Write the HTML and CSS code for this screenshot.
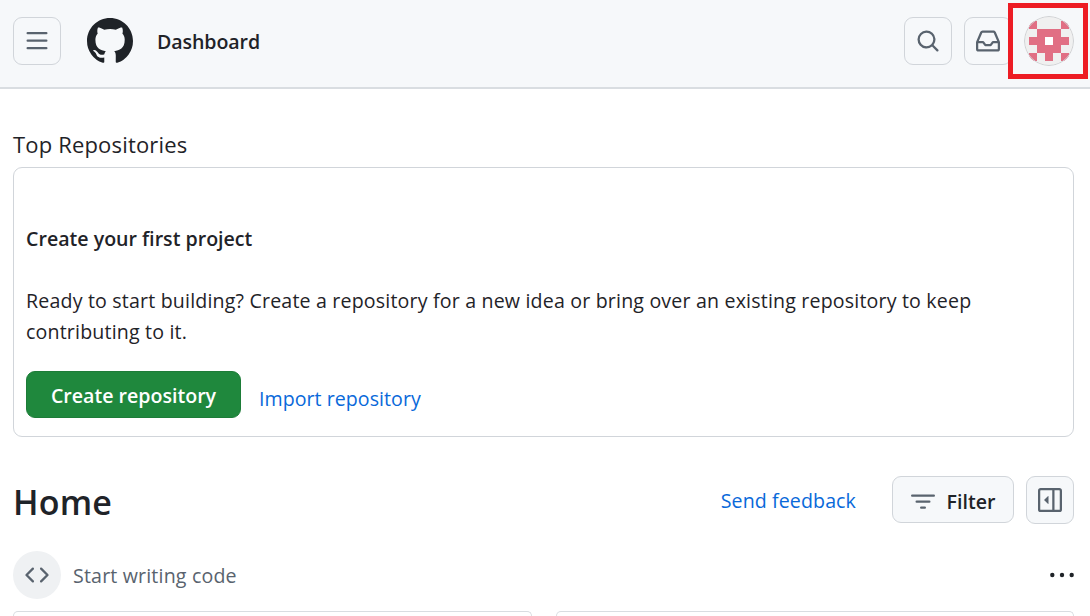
FILE: index.html
```html
<!DOCTYPE html>
<html lang="en">
<head>
  <meta charset="UTF-8">
  <title>Dashboard</title>
  <link rel="stylesheet" href="styles.css">
</head>
<body>
  <header class="header">
    <button class="icon-btn" aria-label="Open menu">
      <svg width="24" height="24" viewBox="0 0 16 16"><path d="M1 2.75A.75.75 0 0 1 1.75 2h12.5a.75.75 0 0 1 0 1.5H1.75A.75.75 0 0 1 1 2.75Zm0 5A.75.75 0 0 1 1.75 7h12.5a.75.75 0 0 1 0 1.5H1.75A.75.75 0 0 1 1 7.75ZM1.75 12h12.5a.75.75 0 0 1 0 1.5H1.75a.75.75 0 0 1 0-1.5Z"/></svg>
    </button>
    <svg class="logo" width="46" height="46" viewBox="0 0 16 16"><path d="M8 0c4.42 0 8 3.58 8 8a8.013 8.013 0 0 1-5.45 7.59c-.4.08-.55-.17-.55-.38 0-.27.01-1.13.01-2.2 0-.75-.25-1.23-.54-1.48 1.78-.2 3.65-.88 3.65-3.95 0-.88-.31-1.59-.82-2.15.08-.2.36-1.02-.08-2.12 0 0-.67-.22-2.2.82-.64-.18-1.32-.27-2-.27-.68 0-1.36.09-2 .27-1.53-1.03-2.2-.82-2.2-.82-.44 1.1-.16 1.92-.08 2.12-.51.56-.82 1.28-.82 2.15 0 3.06 1.86 3.75 3.64 3.95-.23.2-.44.55-.51 1.07-.46.21-1.61.55-2.33-.66-.15-.24-.6-.83-1.23-.82-.67.01-.27.38.01.53.34.19.73.9.82 1.13.16.45.68 1.31 2.69.94 0 .67.01 1.3.01 1.49 0 .21-.15.45-.55.38A7.995 7.995 0 0 1 0 8c0-4.42 3.58-8 8-8Z"/></svg>
    <span class="context">Dashboard</span>
    <div class="header-actions">
      <button class="icon-btn" aria-label="Search">
        <svg width="24" height="24" viewBox="0 0 16 16"><path d="M10.68 11.74a6 6 0 0 1-7.922-8.982 6 6 0 0 1 8.982 7.922l3.04 3.04a.749.749 0 0 1-.326 1.275.749.749 0 0 1-.734-.215ZM11.5 7a4.499 4.499 0 1 0-8.997 0A4.499 4.499 0 0 0 11.5 7Z"/></svg>
      </button>
      <button class="icon-btn" aria-label="Notifications">
        <svg width="24" height="24" viewBox="0 0 16 16"><path d="M2.8 2.06A1.75 1.75 0 0 1 4.41 1h7.18c.7 0 1.333.417 1.61 1.06l2.74 6.395c.04.093.06.194.06.295v4.5A1.75 1.75 0 0 1 14.25 15H1.75A1.75 1.75 0 0 1 0 13.25v-4.5c0-.101.02-.202.06-.295Zm1.61.44a.25.25 0 0 0-.23.152L1.887 8H4.75a.75.75 0 0 1 .6.3L6.625 10h2.75l1.275-1.7a.75.75 0 0 1 .6-.3h2.863L11.82 2.652a.25.25 0 0 0-.23-.152Zm10.09 7h-2.875l-1.275 1.7a.75.75 0 0 1-.6.3h-3.5a.75.75 0 0 1-.6-.3L4.375 9.5H1.5v3.75c0 .138.112.25.25.25h12.5a.25.25 0 0 0 .25-.25Z"/></svg>
      </button>
      <div class="avatar-wrap">
        <svg class="avatar" width="50" height="50" viewBox="0 0 50 50">
          <path fill="#e16f84" shape-rendering="crispEdges" d="M5 5h8v8H5zM37 5h8v8h-8zM13 13h24v8H13zM5 21h16v8H5zM29 21h16v8H29zM13 29h24v8H13zM5 37h8v8H5zM21 37h8v8h-8zM37 37h8v8h-8z"/>
          <path fill="#fff" d="M21 21h8v8h-8z"/>
          <circle cx="25" cy="25" r="24.5" fill="none" stroke="#cfd1d4"/>
        </svg>
        <span class="highlight"></span>
      </div>
    </div>
  </header>

  <main class="content">
    <h2 class="section-title">Top Repositories</h2>
    <section class="project-box">
      <h3 class="project-title">Create your first project</h3>
      <p class="project-text">Ready to start building? Create a repository for a new idea or bring over an existing repository to keep<br>contributing to it.</p>
      <div class="project-actions">
        <button class="btn-primary"><span>Create repository</span></button>
        <a class="link import-link">Import repository</a>
      </div>
    </section>

    <div class="home-row">
      <h1 class="home-title">Home</h1>
      <a class="link feedback-link">Send feedback</a>
      <button class="filter-btn">
        <svg width="24" height="24" viewBox="0 0 16 16"><path d="M.75 3h14.5a.75.75 0 0 1 0 1.5H.75a.75.75 0 0 1 0-1.5ZM3 7.75A.75.75 0 0 1 3.75 7h8.5a.75.75 0 0 1 0 1.5h-8.5A.75.75 0 0 1 3 7.75Zm3 4a.75.75 0 0 1 .75-.75h2.5a.75.75 0 0 1 0 1.5h-2.5a.75.75 0 0 1-.75-.75Z"/></svg>
        <span>Filter</span>
      </button>
      <button class="icon-btn" aria-label="Expand sidebar">
        <svg width="24" height="24" viewBox="0 0 16 16"><path d="m4.177 7.823 2.396-2.396A.25.25 0 0 1 7 5.604v4.792a.25.25 0 0 1-.427.177L4.177 8.177a.25.25 0 0 1 0-.354Z"/><path d="M0 1.75C0 .784.784 0 1.75 0h12.5C15.216 0 16 .784 16 1.75v12.5A1.75 1.75 0 0 1 14.25 16H1.75A1.75 1.75 0 0 1 0 14.25Zm1.75-.25a.25.25 0 0 0-.25.25v12.5c0 .138.112.25.25.25H9.5v-13Zm12.5 13a.25.25 0 0 0 .25-.25V1.75a.25.25 0 0 0-.25-.25H11v13Z"/></svg>
      </button>
    </div>

    <div class="start-row">
      <span class="code-circle">
        <svg width="24" height="24" viewBox="0 0 16 16"><path d="m11.28 3.22 4.25 4.25a.75.75 0 0 1 0 1.06l-4.25 4.25a.749.749 0 0 1-1.275-.326.749.749 0 0 1 .215-.734L13.94 8l-3.72-3.72a.749.749 0 0 1 .326-1.275.749.749 0 0 1 .734.215Zm-6.56 0a.751.751 0 0 1 1.042.018.751.751 0 0 1 .018 1.042L2.06 8l3.72 3.72a.749.749 0 0 1-.326 1.275.749.749 0 0 1-.734-.215L.47 8.53a.75.75 0 0 1 0-1.06Z"/></svg>
      </span>
      <span class="start-text">Start writing code</span>
      <svg class="kebab" width="24" height="24" viewBox="0 0 24 24"><circle cx="2.3" cy="12" r="2.2"/><circle cx="12" cy="12" r="2.2"/><circle cx="21.7" cy="12" r="2.2"/></svg>
    </div>

    <div class="cards">
      <div class="card"></div>
      <div class="card"></div>
    </div>
  </main>
</body>
</html>
```
FILE: styles.css
```css
* {
  box-sizing: border-box;
}

body {
  margin: 0;
  height: 616px;
  overflow: hidden;
  background-color: #fff;
  color: #1f2328;
  font-family: "Open Sans", "Noto Sans", sans-serif;
  font-size: 19.6px;
}

h1, h2, h3, p {
  margin: 0;
}

button {
  font-family: inherit;
  font-size: inherit;
  color: inherit;
  padding: 0;
}

svg {
  display: block;
  flex-shrink: 0;
}

.header {
  display: flex;
  align-items: center;
  height: 89px;
  padding: 0 16px 6px 13px;
  background-color: #f6f8fa;
  border-bottom: 2px solid #d9dde1;
}

.icon-btn {
  display: flex;
  align-items: center;
  justify-content: center;
  width: 48px;
  height: 48px;
  background-color: #f6f8fa;
  border: 1px solid #d1d5da;
  border-radius: 9px;
  fill: #59636e;
}

.logo {
  margin-left: 26px;
  fill: #1f2328;
}

.context {
  margin-left: 24px;
  padding-top: 2px;
  font-weight: 600;
  letter-spacing: -0.1px;
}

.header-actions {
  display: flex;
  align-items: center;
  gap: 12px;
  margin-left: auto;
}

.avatar-wrap {
  position: relative;
}

.avatar {
  border-radius: 50%;
  background-color: #f0f0f0;
}

/* red frame around the avatar */
.highlight {
  position: absolute;
  top: -13px;
  left: -16px;
  width: 80px;
  height: 76px;
  border: 5px solid #ed1c24;
}

.content {
  padding: 40px 16px 0 13px;
}

.section-title {
  height: 38px;
  line-height: 30px;
  font-size: 22px;
  font-weight: 400;
  letter-spacing: 0.17px;
}

.project-box {
  height: 270px;
  padding: 55px 12px 0;
  border: 1px solid #d1d5da;
  border-radius: 9px;
}

.project-title {
  line-height: 32px;
  font-size: 19.6px;
  font-weight: 600;
}

.project-text {
  margin-top: 30px;
  line-height: 31px;
  letter-spacing: 0.175px;
  white-space: nowrap;
}

.project-actions {
  display: flex;
  margin-top: 24px;
}

.btn-primary {
  width: 215px;
  height: 47px;
  padding-top: 2px;
  background-color: #1f883d;
  border: 1px solid #1d7c38;
  border-radius: 9px;
  color: #fff;
  font-weight: 600;
}

.link {
  color: #0969da;
  letter-spacing: 0.1px;
}

.import-link {
  margin-left: 18px;
  line-height: 55px;
  height: 47px;
  letter-spacing: 0.04px;
}

.home-row {
  display: flex;
  align-items: center;
  height: 48px;
  margin-top: 39px;
}

.home-title {
  padding-top: 4px;
  font-size: 34px;
  font-weight: 600;
  letter-spacing: 0.2px;
}

.feedback-link {
  margin-left: auto;
}

.filter-btn {
  display: flex;
  align-items: center;
  justify-content: center;
  gap: 12px;
  width: 122px;
  height: 47px;
  margin: 0 12px 1px 36px;
  background-color: #f6f8fa;
  border: 1px solid #d1d5da;
  border-radius: 9px;
  font-weight: 600;
}

.filter-btn svg {
  margin-top: 4px;
  fill: #59636e;
}

.filter-btn span {
  padding-top: 3px;
}

.start-row {
  display: flex;
  align-items: center;
  height: 48px;
  margin-top: 27px;
}

.code-circle {
  display: flex;
  align-items: center;
  justify-content: center;
  width: 48px;
  height: 48px;
  border-radius: 50%;
  background-color: #eff1f3;
  fill: #59636e;
}

.start-text {
  margin-left: 12px;
  color: #59636e;
  letter-spacing: 0.17px;
}

.kebab {
  margin-left: auto;
  fill: #1f2328;
}

.cards {
  display: grid;
  grid-template-columns: 1fr 1fr;
  gap: 24px;
  margin-top: 12px;
}

.card {
  height: 5px;
  border: 1px solid #d9dde1;
  border-bottom: none;
  border-radius: 5px 5px 0 0;
}
```
